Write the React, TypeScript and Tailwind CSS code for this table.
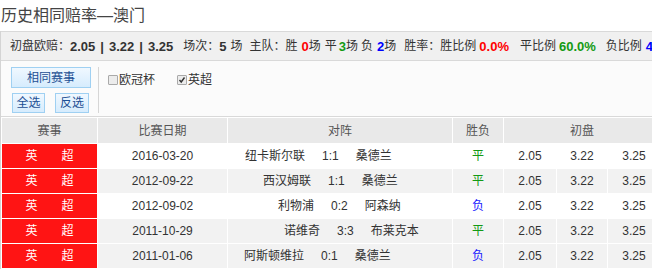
const rows = [
  { date: '2016-03-20', home: '纽卡斯尔联', score: '1:1', away: '桑德兰', res: '平', pl: 'pl-[17px]', bg: 'bg-white' },
  { date: '2012-09-22', home: '西汉姆联', score: '1:1', away: '桑德兰', res: '平', pl: 'pl-[35px]', bg: 'bg-[#f2f2f2]' },
  { date: '2012-09-02', home: '利物浦', score: '0:2', away: '阿森纳', res: '负', pl: 'pl-[50px]', bg: 'bg-white' },
  { date: '2011-10-29', home: '诺维奇', score: '3:3', away: '布莱克本', res: '平', pl: 'pl-[56px]', bg: 'bg-[#f2f2f2]' },
  { date: '2011-01-06', home: '阿斯顿维拉', score: '0:1', away: '桑德兰', res: '负', pl: 'pl-[16px]', bg: 'bg-[#f2f2f2]' },
];

function Checkbox({ checked }: { checked?: boolean }) {
  return (
    <span className="inline-flex h-[10px] w-[10px] items-center justify-center rounded-[1px] border border-[#a9a9a9] bg-[#ececec]">
      {checked && (
        <svg width="8" height="8" viewBox="0 0 8 8">
          <polyline points="1.5,4 3.2,6 6.5,1.5" fill="none" stroke="#333" strokeWidth="1.4" />
        </svg>
      )}
    </span>
  );
}

function BlueButton({ label, className }: { label: string; className: string }) {
  return (
    <div
      className={`flex items-center justify-center border border-[#9fd0f2] bg-gradient-to-b from-[#f0f8ff] to-[#d6ecfd] text-[12px] text-[#1d4f94] ${className}`}
    >
      {label}
    </div>
  );
}

export default function App() {
  return (
    <div className="h-[270px] w-[652px] overflow-hidden bg-white font-['Liberation_Sans','Noto_Sans_CJK_SC',sans-serif] text-[12px] text-[#333]">
      <div className="w-[660px]">
        {/* Title */}
        <div className="h-[31px] pl-[1px] pt-[7px] text-[16px] leading-[18px] text-[#444]">历史相同赔率—澳门</div>

        <div className="border-l border-[#d4d4d4]">
          {/* Summary */}
          <div className="flex h-[30px] items-center whitespace-nowrap border-y border-[#d9d9d9] bg-[#f0f0f0] pl-[9px] leading-none">
            <span>初盘欧赔：</span>
            <b className="text-[13px]">2.05</b>
            <b className="mx-[5px] text-[13px]">|</b>
            <b className="text-[13px]">3.22</b>
            <b className="mx-[5px] text-[13px]">|</b>
            <b className="text-[13px]">3.25</b>
            <span className="ml-[10px]">场次：</span>
            <b className="text-[13px]">5</b>
            <span className="ml-[4px]">场</span>
            <span className="ml-[7px]">主队：胜</span>
            <b className="ml-[4px] text-[13px] text-[#ff0000]">0</b>
            <span>场</span>
            <span className="ml-[4px]">平</span>
            <b className="ml-[2px] text-[13px] text-[#139a13]">3</b>
            <span>场</span>
            <span className="ml-[3px]">负</span>
            <b className="ml-[4px] text-[13px] text-[#0000ff]">2</b>
            <span>场</span>
            <span className="ml-[8px]">胜率：胜比例</span>
            <b className="ml-[3px] text-[13px] text-[#ff0000]">0.0%</b>
            <span className="ml-[11px]">平比例</span>
            <b className="ml-[3px] text-[13px] text-[#139a13]">60.0%</b>
            <span className="ml-[10px]">负比例</span>
            <b className="ml-[4px] text-[13px] text-[#0000ff]">40.0%</b>
          </div>

          {/* Filters */}
          <div className="flex h-[56px] border-b border-[#d9d9d9] bg-[#fbfbfb]">
            <div className="flex w-[97px] flex-col gap-[5px] pl-[10px] pt-[6px]">
              <BlueButton label="相同赛事" className="h-[21px] w-[80px]" />
              <div className="flex gap-[10px] pl-[1px]">
                <BlueButton label="全选" className="h-[20px] w-[33px]" />
                <BlueButton label="反选" className="h-[20px] w-[34px]" />
              </div>
            </div>
            <div className="mt-[6px] h-[46px] w-px bg-[#d6d6d6]" />
            <div className="flex h-[38px] items-center pl-[9px] text-[12px]">
              <label className="flex items-center">
                <Checkbox />
                <span className="ml-[1px]">欧冠杯</span>
              </label>
              <label className="ml-[22px] flex items-center">
                <Checkbox checked />
                <span className="ml-[1px]">英超</span>
              </label>
            </div>
          </div>

          {/* Table */}
          <table className="w-[659px] table-fixed border-collapse text-center leading-none">
            <colgroup>
              <col className="w-[96px]" />
              <col className="w-[130px]" />
              <col className="w-[225px]" />
              <col className="w-[51px]" />
              <col className="w-[53px]" />
              <col className="w-[51px]" />
              <col className="w-[53px]" />
            </colgroup>
            <thead>
              <tr className="h-[26px] bg-[#e9e9e9] text-[#555]">
                <th className="border border-white font-normal">赛事</th>
                <th className="border border-white font-normal">比赛日期</th>
                <th className="border border-white font-normal">对阵</th>
                <th className="border border-white font-normal">胜负</th>
                <th colSpan={3} className="border border-white font-normal">初盘</th>
              </tr>
            </thead>
            <tbody>
              {rows.map((r) => (
                <tr key={r.date} className={`h-[25px] ${r.bg}`}>
                  <td className="border border-white bg-[#ff1414] text-white">英　　超</td>
                  <td className="border border-white">{r.date}</td>
                  <td className={`border border-white text-left ${r.pl}`}>
                    <span className="inline-flex gap-[17px] whitespace-nowrap">
                      <span>{r.home}</span>
                      <span>{r.score}</span>
                      <span>{r.away}</span>
                    </span>
                  </td>
                  <td
                    className={`border border-white ${r.res === '平' ? 'text-[#139a13]' : 'text-[#1a1aff]'}`}
                  >
                    {r.res}
                  </td>
                  <td className="border border-white">2.05</td>
                  <td className="border border-white">3.22</td>
                  <td className="border border-white">3.25</td>
                </tr>
              ))}
            </tbody>
          </table>
        </div>
      </div>
    </div>
  );
}
